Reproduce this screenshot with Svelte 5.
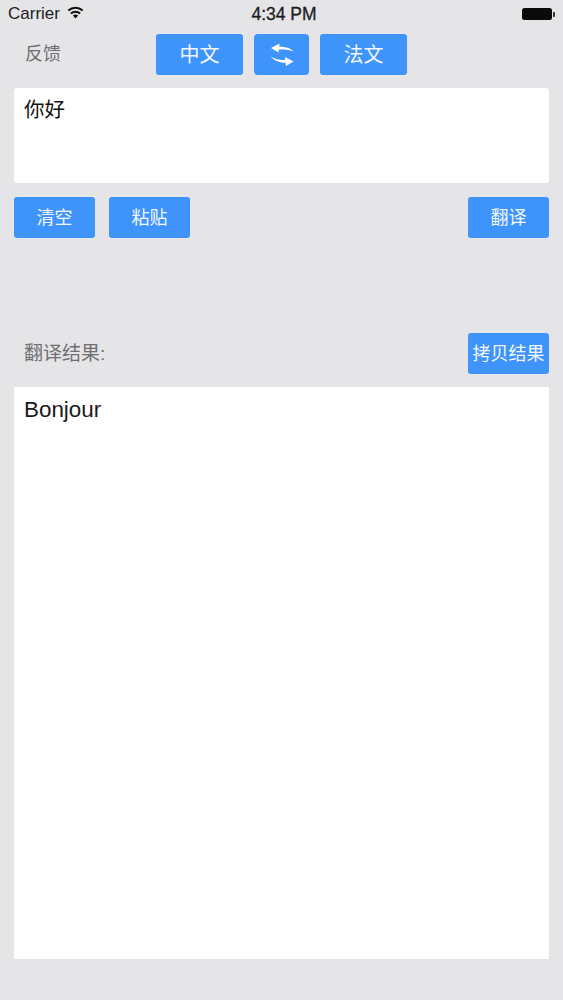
<script lang="ts">
	let source = $state('你好');
	let result = $state('Bonjour');
</script>

<div class="page">
	<div class="status-bar">
		<div class="status-left">
			<span>Carrier</span>
			<svg class="wifi" width="17" height="13" viewBox="0 0 17 13" aria-hidden="true">
				<path d="M8.5 12.6 L5.9 9.6 A3.9 3.9 0 0 1 11.1 9.6 Z" fill="#111" />
				<path d="M3.9 7.4 A6.9 6.9 0 0 1 13.1 7.4" fill="none" stroke="#111" stroke-width="2" />
				<path d="M1.3 4.5 A10.6 10.6 0 0 1 15.7 4.5" fill="none" stroke="#111" stroke-width="2" />
			</svg>
		</div>
		<div class="status-time">4:34 PM</div>
		<div class="status-right">
			<div class="battery"></div>
			<div class="battery-tip"></div>
		</div>
	</div>

	<div class="toolbar">
		<span class="feedback">反馈</span>
		<div class="lang-group">
			<button class="btn lang">中文</button>
			<button class="btn swap" aria-label="swap">
				<svg width="26" height="24" viewBox="0 0 26 24" aria-hidden="true">
					<path d="M2 5 L10.5 0.5 L9.5 9.5 Z" fill="#fff" />
					<path d="M8 3.6 C14 3.6 21 4.4 24.5 8.5 C20 6.6 14 6.2 8 6.6 Z" fill="#fff" />
					<path d="M24.5 18.5 L16 14 L17 23 Z" fill="#fff" />
					<path d="M18 16.8 C12 17.2 6 16.6 1.8 13.5 C5 18 12 20 18 19.8 Z" fill="#fff" />
				</svg>
			</button>
			<button class="btn lang">法文</button>
		</div>
	</div>

	<div class="box input-box">{source}</div>

	<div class="actions">
		<div class="actions-left">
			<button class="btn action">清空</button>
			<button class="btn action">粘贴</button>
		</div>
		<button class="btn action">翻译</button>
	</div>

	<div class="result-head">
		<span class="result-label">翻译结果:</span>
		<button class="btn copy">拷贝结果</button>
	</div>

	<div class="box result-box">{result}</div>
</div>

<style>
	:global(body) {
		background: #e5e5e7;
	}

	.page {
		display: flex;
		flex-direction: column;
		height: 1000px;
		box-sizing: border-box;
		background: #e5e5e7;
		font-family: "Liberation Sans", "Noto Sans CJK SC", sans-serif;
		overflow: hidden;
	}

	.status-bar {
		display: grid;
		grid-template-columns: 1fr auto 1fr;
		align-items: center;
		height: 28px;
		padding: 0 8px;
		color: #1c1c1e;
		font-size: 17px;
	}

	.status-left {
		display: flex;
		align-items: center;
		gap: 7px;
	}

	.wifi {
		margin-top: -3px;
	}

	.status-time {
		margin-left: 5px;
		font-weight: 500;
		font-size: 17.5px;
		-webkit-text-stroke: 0.3px #1c1c1e;
	}

	.status-right {
		display: flex;
		align-items: center;
		justify-content: flex-end;
		gap: 1px;
	}

	.battery {
		width: 30px;
		height: 12px;
		background: #0a0a0a;
		border-radius: 2.5px;
	}

	.battery-tip {
		width: 2px;
		height: 5px;
		background: #333;
		border-radius: 0 1px 1px 0;
	}

	.toolbar {
		display: grid;
		grid-template-columns: 1fr auto 1fr;
		align-items: center;
		margin-top: 6px;
		padding: 0 14px;
	}

	.feedback {
		padding-left: 11px;
		padding-bottom: 5px;
		color: #6f6f71;
		font-size: 18px;
	}

	.lang-group {
		display: flex;
		gap: 11px;
	}

	.btn {
		display: flex;
		align-items: center;
		justify-content: center;
		height: 41px;
		padding: 0 0 3px;
		border: none;
		border-radius: 3px;
		background: #3f94fb;
		color: #f2f7fe;
		font-family: inherit;
		cursor: pointer;
	}

	.lang {
		width: 87px;
		font-size: 20px;
	}

	.swap {
		width: 55px;
		padding: 0;
		border-radius: 4px;
	}

	.box {
		box-sizing: border-box;
		margin: 0 14px;
		padding: 9px 10px;
		background: #fff;
		color: #1a1a1a;
		line-height: 26px;
	}

	.input-box {
		height: 95px;
		margin-top: 13px;
		border-radius: 3px;
		color: #111;
		font-size: 20.5px;
	}

	.actions {
		display: flex;
		justify-content: space-between;
		margin-top: 14px;
		padding: 0 14px;
	}

	.actions-left {
		display: flex;
		gap: 14px;
	}

	.action {
		width: 81px;
		font-size: 18px;
	}

	.result-head {
		display: flex;
		align-items: center;
		justify-content: space-between;
		margin-top: 95px;
		padding: 0 14px 0 24px;
	}

	.result-label {
		padding-bottom: 4px;
		color: #6f6f71;
		font-size: 19px;
	}

	.copy {
		width: 81px;
		font-size: 18px;
		white-space: nowrap;
	}

	.result-box {
		height: 572px;
		margin-top: 13px;
		padding-top: 10px;
		font-size: 22.4px;
	}
</style>
